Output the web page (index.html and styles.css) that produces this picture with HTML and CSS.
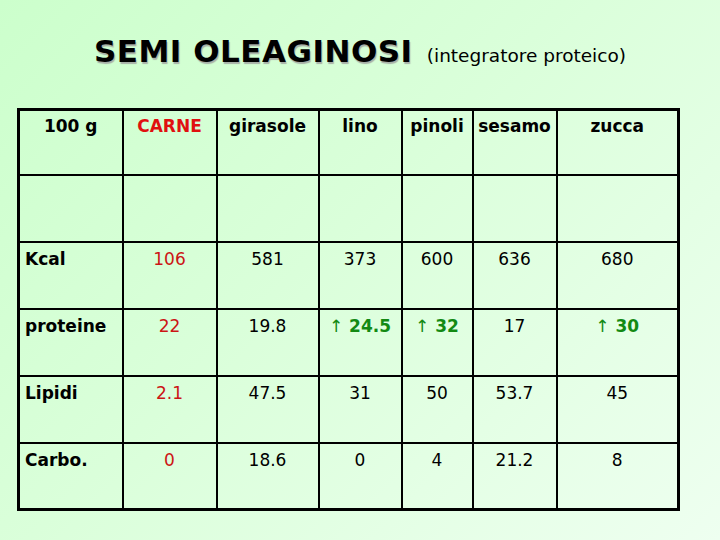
FILE: index.html
```html
<!DOCTYPE html>
<html lang="it">
<head>
<meta charset="utf-8">
<title>Semi oleaginosi</title>
<link rel="stylesheet" href="styles.css">
</head>
<body>
<div class="slide">
  <h1 class="title"><span class="main">SEMI OLEAGINOSI</span> <span class="sub">(integratore proteico)</span></h1>
  <table class="grid">
    <colgroup>
      <col class="c1"><col class="c2"><col class="c3"><col class="c4"><col class="c5"><col class="c6"><col class="c7">
    </colgroup>
    <tr class="head">
      <th class="corner">100 g</th>
      <th class="red">CARNE</th>
      <th>girasole</th>
      <th>lino</th>
      <th>pinoli</th>
      <th>sesamo</th>
      <th>zucca</th>
    </tr>
    <tr>
      <td class="label"></td><td></td><td></td><td></td><td></td><td></td><td></td>
    </tr>
    <tr>
      <td class="label">Kcal</td>
      <td class="red">106</td><td>581</td><td>373</td><td>600</td><td>636</td><td>680</td>
    </tr>
    <tr>
      <td class="label">proteine</td>
      <td class="red">22</td><td>19.8</td>
      <td class="up"><span class="arrow">↑</span> 24.5</td>
      <td class="up"><span class="arrow">↑</span> 32</td>
      <td>17</td>
      <td class="up"><span class="arrow">↑</span> 30</td>
    </tr>
    <tr>
      <td class="label">Lipidi</td>
      <td class="red">2.1</td><td>47.5</td><td>31</td><td>50</td><td>53.7</td><td>45</td>
    </tr>
    <tr>
      <td class="label">Carbo.</td>
      <td class="red">0</td><td>18.6</td><td>0</td><td>4</td><td>21.2</td><td>8</td>
    </tr>
  </table>
</div>
</body>
</html>
```
FILE: styles.css
```css
html, body {
  margin: 0;
  padding: 0;
}
body {
  width: 720px;
  height: 540px;
  overflow: hidden;
  background: linear-gradient(135deg, #ccffcc 0%, #daffda 45%, #eefff0 100%);
  font-family: "DejaVu Sans", Verdana, sans-serif;
  color: #000;
}
.slide {
  padding-top: 32px;
}
.title {
  margin: 0;
  text-align: center;
  font-weight: normal;
  line-height: 38px;
  height: 40px;
  white-space: nowrap;
}
.title .main {
  font-size: 31px;
  font-weight: bold;
  text-shadow: 1px 2px 1px #a8b0a8;
  letter-spacing: 0.5px;
}
.title .sub {
  font-size: 18.5px;
  margin-left: 4px;
}
.grid {
  margin: 36px 0 0 17px;
  border-collapse: collapse;
  table-layout: fixed;
  width: 662px;
  border: 3px solid #000;
}
.c1 { width: 104px; }
.c2 { width: 94px; }
.c3 { width: 102px; }
.c4 { width: 83px; }
.c5 { width: 71px; }
.c6 { width: 84px; }
.c7 { width: 122px; }
.grid th, .grid td {
  border: 2px solid #000;
  height: 67px;
  padding: 5px 2px 0;
  vertical-align: top;
  text-align: center;
  font-size: 17px;
  line-height: 22px;
  box-sizing: border-box;
}
.grid .head th {
  height: 65px;
  padding-top: 4px;
}
.grid th {
  font-weight: bold;
}
.grid td.label {
  text-align: left;
  font-weight: bold;
  padding-left: 5px;
}
.red {
  color: #cc1515;
}
.grid th.red {
  color: #e01010;
}
.up {
  color: #138a13;
  font-weight: bold;
}
.up .arrow {
  font-weight: normal;
}
```
